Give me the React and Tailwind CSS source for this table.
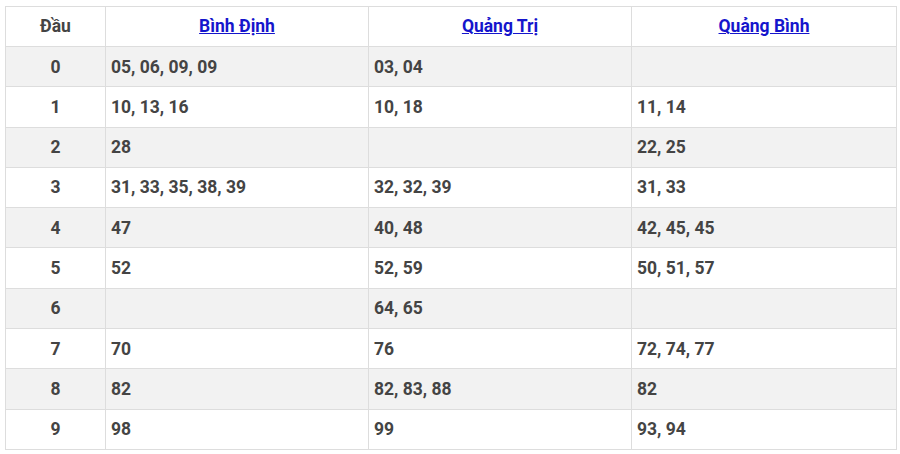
import React from "react";

const rows = [
  ["0", "05, 06, 09, 09", "03, 04", ""],
  ["1", "10, 13, 16", "10, 18", "11, 14"],
  ["2", "28", "", "22, 25"],
  ["3", "31, 33, 35, 38, 39", "32, 32, 39", "31, 33"],
  ["4", "47", "40, 48", "42, 45, 45"],
  ["5", "52", "52, 59", "50, 51, 57"],
  ["6", "", "64, 65", ""],
  ["7", "70", "76", "72, 74, 77"],
  ["8", "82", "82, 83, 88", "82"],
  ["9", "98", "99", "93, 94"],
];

const provinces = ["Bình Định", "Quảng Trị", "Quảng Bình"];

export default function App() {
  return (
    <div className="w-[900px] h-[454px] bg-white pt-[6px] pl-[5px] font-['Roboto',sans-serif] text-[#444]">
      <table className="w-[891px] border-collapse table-fixed">
        <colgroup>
          <col className="w-[100px]" />
          <col className="w-[263px]" />
          <col className="w-[263px]" />
          <col className="w-[265px]" />
        </colgroup>
        <thead>
          <tr className="h-[40px]">
            <th className="border border-[#ddd] text-[17.5px] font-bold text-center">Đầu</th>
            {provinces.map((p) => (
              <th key={p} className="border border-[#ddd] text-[17.5px] font-bold text-center">
                <a href="#" className="text-[#1515cc] underline">{p}</a>
              </th>
            ))}
          </tr>
        </thead>
        <tbody>
          {rows.map((r, i) => (
            <tr key={r[0]} className={`h-[40.3px] ${i % 2 === 0 ? "bg-[#f2f2f2]" : "bg-white"}`}>
              <td className="border border-[#ddd] text-center text-[17.5px] font-bold">{r[0]}</td>
              {r.slice(1).map((v, j) => (
                <td key={j} className="border border-[#ddd] px-[5px] text-[17.5px] font-bold">{v}</td>
              ))}
            </tr>
          ))}
        </tbody>
      </table>
    </div>
  );
}
